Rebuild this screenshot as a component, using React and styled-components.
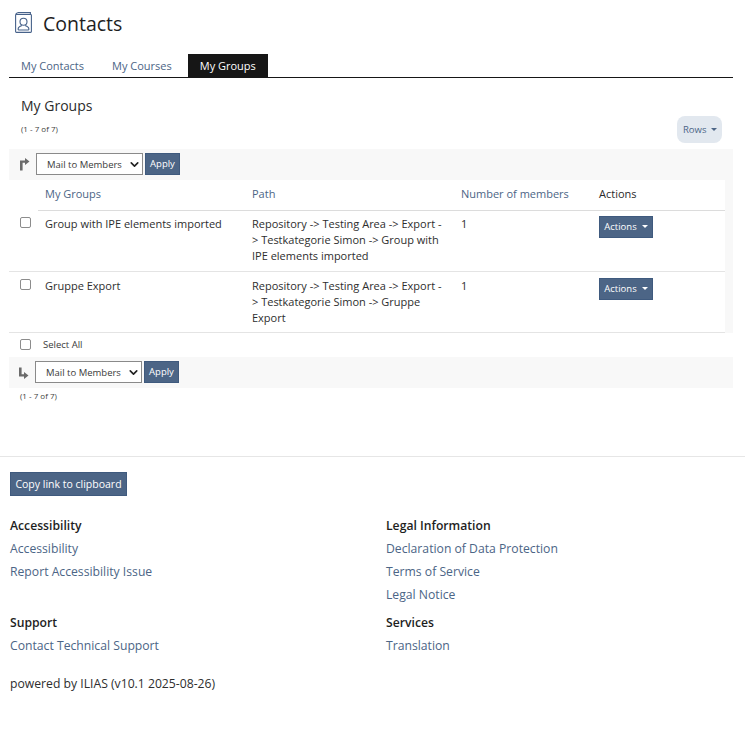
import React from "react";
import styled, { createGlobalStyle } from "styled-components";
import { ChevronDown } from "lucide-react";

const GlobalStyle = createGlobalStyle`
  html, body {
    margin: 0;
    padding: 0;
    background: #fff;
    font-family: "Open Sans", "Noto Sans", sans-serif;
    color: #1f1f1f;
  }
`;

const Page = styled.div`
  width: 745px;
  height: 750px;
  overflow: hidden;
  display: flex;
  flex-direction: column;
`;

const Header = styled.header`
  display: flex;
  align-items: center;
  gap: 11px;
  height: 21px;
  padding: 12px 0 0 15px;
`;

const Title = styled.h1`
  margin: 3px 0 0;
  font-size: 19.5px;
  font-weight: 500;
  line-height: 24px;
  color: #1e1e1e;
`;

const TabBar = styled.nav`
  display: flex;
  margin: 21px 12px 0 9px;
  height: 23px;
  border-bottom: 1px solid #161616;
`;

const Tab = styled.a`
  display: flex;
  align-items: center;
  padding: 0 12px;
  margin-right: 4px;
  font-size: 11px;
  color: ${(p) => (p.$active ? "#fff" : "#4c6586")};
  background: ${(p) => (p.$active ? "#161616" : "transparent")};
`;

const Content = styled.section`
  margin: 0 12px 0 9px;
`;

const SectionHead = styled.div`
  display: flex;
  justify-content: space-between;
  align-items: flex-start;
  height: 71px;
  padding: 18px 11px 0 12px;
  box-sizing: border-box;
`;

const Heading = styled.h2`
  margin: 0 0 7px;
  font-size: 14px;
  font-weight: 520;
  line-height: 20px;
  color: #2c2c2c;
`;

const Count = styled.div`
  font-size: 8px;
  line-height: 11px;
  color: #3c3c3c;
  margin: ${(p) => p.$top || 0}px 0 0 ${(p) => p.$inset || 0}px;
`;

const RowsButton = styled.button`
  display: flex;
  align-items: center;
  gap: 5px;
  width: 45px;
  height: 27px;
  margin-top: 20px;
  padding: 0 0 0 6px;
  border: 0;
  border-radius: 8px;
  background: #e2e8ef;
  color: #4c6586;
  font: 9.5px "Open Sans", sans-serif;
`;

const Caret = styled.span`
  width: 0;
  height: 0;
  border-left: 3px solid transparent;
  border-right: 3px solid transparent;
  border-top: 3px solid currentColor;
`;

const Toolbar = styled.div`
  display: flex;
  align-items: center;
  height: 31px;
  padding-left: ${(p) => p.$inset}px;
  padding-bottom: 1px;
  box-sizing: border-box;
  background: #f8f8f8;
`;

const ToolIcon = styled.svg`
  width: 10px;
  height: 13px;
  margin-right: 6px;
  color: #6b6b6b;
`;

const SelectBox = styled.div`
  display: flex;
  align-items: center;
  justify-content: space-between;
  box-sizing: border-box;
  width: 107px;
  height: 22px;
  padding: 0 1px 0 10px;
  background: #fff;
  border: 1px solid #8a8a8a;
  font-size: 9.5px;
  color: #3a3a3a;
`;

const PrimaryButton = styled.button`
  display: inline-flex;
  align-items: center;
  justify-content: center;
  gap: 5px;
  box-sizing: border-box;
  width: ${(p) => p.$width}px;
  height: ${(p) => p.$height}px;
  margin-left: ${(p) => p.$left || 0}px;
  padding: 0 0 1px;
  vertical-align: top;
  border: 1px solid #3f5a7e;
  background: #4c6586;
  color: #fff;
  font: ${(p) => p.$size || 9.5}px "Open Sans", sans-serif;
`;

const TableWrap = styled.div`
  background: #f8f8f8;
  padding-right: 8px;
`;

const Grid = styled.div`
  background: #fff;
  display: grid;
  grid-template-columns: 29px 207px 209px 138px 1fr;
  font-size: 11px;
  line-height: 16px;
  color: #2e2e2e;
`;

const HeadCell = styled.div`
  display: flex;
  align-items: center;
  box-sizing: border-box;
  height: 31px;
  padding: 0 0 3px 7px;
  border-bottom: 1px solid #dcdcdc;
  color: ${(p) => (p.$plain ? "#2a2a2a" : "#4c6586")};
`;

const EmptyHead = styled.div`
  height: 31px;
`;

const Cell = styled.div`
  box-sizing: border-box;
  height: 61px;
  padding: ${(p) => p.$top}px 9px 0 7px;
  border-bottom: 1px solid #e4e4e4;
`;

const CheckCell = styled(Cell)`
  padding: ${(p) => p.$top + 1}px 0 0 11px;
`;

const CheckBox = styled.span`
  display: block;
  box-sizing: border-box;
  width: 11px;
  height: 11px;
  border: 1px solid #8c8c8c;
  border-radius: 2px;
  background: #fff;
`;

const SelectAll = styled.div`
  display: flex;
  align-items: center;
  gap: 12px;
  height: 24px;
  padding: 0 0 2px 11px;
  box-sizing: border-box;
  font-size: 9.5px;
  color: #3a3a3a;
`;

const Divider = styled.hr`
  margin: 55px 0 0;
  border: 0;
  border-top: 1px solid #e6e6e6;
`;

const Footer = styled.footer`
  padding: 15px 0 0 10px;
`;

const FooterColumns = styled.div`
  display: grid;
  grid-template-columns: 376px 1fr;
  margin-top: 18px;
`;

const FooterGroup = styled.div`
  display: flex;
  flex-direction: column;
  height: ${(p) => p.$height}px;
`;

const FooterTitle = styled.div`
  font-size: 12.2px;
  font-weight: 600;
  line-height: 23px;
  color: #1e1e1e;
`;

const FooterLink = styled.a`
  font-size: 12.2px;
  line-height: 23px;
  color: #4c6586;
`;

const Powered = styled.div`
  margin-top: 15px;
  font-size: 12.2px;
  line-height: 23px;
  color: #2e2e2e;
`;

const groups = [
  {
    name: "Group with IPE elements imported",
    path: "Repository -> Testing Area -> Export -> Testkategorie Simon -> Group with IPE elements imported",
    top: 5,
  },
  {
    name: "Gruppe Export",
    path: "Repository -> Testing Area -> Export -> Testkategorie Simon -> Gruppe Export",
    top: 6,
  },
];

const ContactsIcon = () => (
  <svg width="17" height="21" viewBox="0 0 17 21" fill="none" stroke="#47628a" strokeWidth="1.1">
    <path d="M2.5 .6H15.4V2.5" />
    <rect x=".6" y="2.5" width="15.8" height="17.9" rx=".8" />
    <path d="M.6 2.5L2.5 .6" />
    <circle cx="8.5" cy="9.8" r="3.5" />
    <path d="M3.2 18v-1.4c0-1.5 2.2-2.4 3.7-3M13.8 18v-1.4c0-1.5-2.2-2.4-3.7-3M3.2 18h10.6" />
  </svg>
);

const ArrowUpIcon = () => (
  <ToolIcon viewBox="0 0 10 13" fill="currentColor">
    <path d="M0 12.5V2.5H5V0L9.5 3.5 5 7V4.7H2.6V12.5z" />
  </ToolIcon>
);

const ArrowDownIcon = () => (
  <ToolIcon viewBox="0 0 10 13" fill="currentColor">
    <path d="M0 1.5V10.5H5V13L9.5 9.5 5 6V8.2H2.6V1.5z" />
  </ToolIcon>
);

const BulkActions = ({ inset, icon }) => (
  <Toolbar $inset={inset}>
    {icon}
    <SelectBox>
      Mail to Members
      <ChevronDown size={13} strokeWidth={3} color="#222" />
    </SelectBox>
    <PrimaryButton $width={35} $height={22} $left={2}>
      Apply
    </PrimaryButton>
  </Toolbar>
);

export default function App() {
  return (
    <Page>
      <GlobalStyle />
      <Header>
        <ContactsIcon />
        <Title>Contacts</Title>
      </Header>
      <TabBar>
        <Tab>My Contacts</Tab>
        <Tab>My Courses</Tab>
        <Tab $active>My Groups</Tab>
      </TabBar>
      <Content>
        <SectionHead>
          <div>
            <Heading>My Groups</Heading>
            <Count>(1 - 7 of 7)</Count>
          </div>
          <RowsButton>
            Rows <Caret />
          </RowsButton>
        </SectionHead>
        <BulkActions inset={11} icon={<ArrowUpIcon />} />
        <TableWrap>
          <Grid>
            <EmptyHead />
            <HeadCell>My Groups</HeadCell>
            <HeadCell>Path</HeadCell>
            <HeadCell>Number of members</HeadCell>
            <HeadCell $plain>Actions</HeadCell>
            {groups.map((g) => (
              <React.Fragment key={g.name}>
                <CheckCell $top={g.top}>
                  <CheckBox />
                </CheckCell>
                <Cell $top={g.top}>{g.name}</Cell>
                <Cell $top={g.top}>{g.path}</Cell>
                <Cell $top={g.top}>1</Cell>
                <Cell $top={g.top}>
                  <PrimaryButton $width={54} $height={22}>
                    Actions <Caret />
                  </PrimaryButton>
                </Cell>
              </React.Fragment>
            ))}
          </Grid>
        </TableWrap>
        <SelectAll>
          <CheckBox />
          Select All
        </SelectAll>
        <BulkActions inset={10} icon={<ArrowDownIcon />} />
        <Count $inset={11} $top={2}>(1 - 7 of 7)</Count>
      </Content>
      <Divider />
      <Footer>
        <PrimaryButton $width={117} $height={24} $size={10.5}>
          Copy link to clipboard
        </PrimaryButton>
        <FooterColumns>
          <FooterGroup $height={97}>
            <FooterTitle>Accessibility</FooterTitle>
            <FooterLink>Accessibility</FooterLink>
            <FooterLink>Report Accessibility Issue</FooterLink>
          </FooterGroup>
          <FooterGroup $height={97}>
            <FooterTitle>Legal Information</FooterTitle>
            <FooterLink>Declaration of Data Protection</FooterLink>
            <FooterLink>Terms of Service</FooterLink>
            <FooterLink>Legal Notice</FooterLink>
          </FooterGroup>
          <FooterGroup $height={46}>
            <FooterTitle>Support</FooterTitle>
            <FooterLink>Contact Technical Support</FooterLink>
          </FooterGroup>
          <FooterGroup $height={46}>
            <FooterTitle>Services</FooterTitle>
            <FooterLink>Translation</FooterLink>
          </FooterGroup>
        </FooterColumns>
        <Powered>powered by ILIAS (v10.1 2025-08-26)</Powered>
      </Footer>
    </Page>
  );
}
